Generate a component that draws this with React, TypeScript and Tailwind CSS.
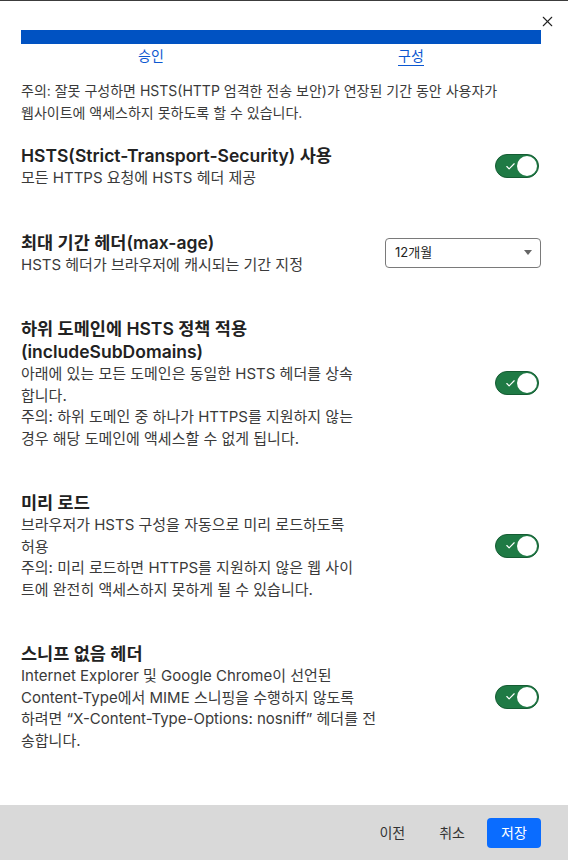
import { Check, X } from "lucide-react";

const font = { fontFamily: "Inter, 'Noto Sans CJK KR', sans-serif" };

function Toggle() {
  return (
    <div className="relative mr-[2px] flex h-[24px] w-[44px] shrink-0 items-center rounded-full border border-[#155c33] bg-[#1f7a45]">
      <Check className="ml-[9px] h-[11px] w-[11px] text-white" strokeWidth={2.5} />
      <div className="absolute right-[1px] top-[1px] h-[20px] w-[20px] rounded-full bg-white" />
    </div>
  );
}

function Section({
  title,
  lines,
  control,
}: {
  title: React.ReactNode;
  lines: string[];
  control: React.ReactNode;
}) {
  return (
    <div className="flex items-center justify-between">
      <div className="w-[345px]">
        <h3 className="text-[17.5px] font-semibold leading-[23px] text-[#222]">{title}</h3>
        <div className="whitespace-nowrap text-[15px] leading-[21.5px] text-[#3a3a3a]">
          {lines.map((line) => (
            <div key={line}>{line}</div>
          ))}
        </div>
      </div>
      {control}
    </div>
  );
}

export default function App() {
  return (
    <div className="flex h-[860px] flex-col border-t border-[#3c3c3c] bg-white" style={font}>
      <div className="relative flex-1 px-[21px] pt-[29px]">
        <button className="absolute right-[12px] top-[12px] text-[#222]">
          <X className="h-[17px] w-[17px]" strokeWidth={1.5} />
        </button>
        <div className="h-[14px] w-[520px] bg-[#0052c2]" />
        <div className="grid w-[520px] grid-cols-2 text-[14px] leading-[20px] text-[#0b57d0]">
          <div className="pt-[2px] text-center">승인</div>
          <div className="pt-[2px] text-center">
            <span className="border-b border-[#0b57d0] pb-[1px]">구성</span>
          </div>
        </div>

        <p className="mt-[14px] w-[520px] text-[14px] leading-[22px] text-[#3a3a3a]">
          주의: 잘못 구성하면 HSTS(HTTP 엄격한 전송 보안)가 연장된 기간 동안 사용자가
          <br />
          웹사이트에 액세스하지 못하도록 할 수 있습니다.
        </p>

        <div className="mt-[20px] flex w-[520px] flex-col gap-[42px]">
          <Section
            title="HSTS(Strict-Transport-Security) 사용"
            lines={["모든 HTTPS 요청에 HSTS 헤더 제공"]}
            control={<Toggle />}
          />

          <Section
            title="최대 기간 헤더(max-age)"
            lines={["HSTS 헤더가 브라우저에 캐시되는 기간 지정"]}
            control={
              <div className="flex h-[30px] w-[156px] items-center justify-between rounded-[4px] border border-[#7a7a7a] pl-[9px] pr-[8px] text-[13px] text-[#222]">
                <span>12개월</span>
                <span className="h-0 w-0 border-x-[4px] border-t-[5px] border-x-transparent border-t-[#666]" />
              </div>
            }
          />

          <Section
            title={
              <>
                하위 도메인에 HSTS 정책 적용
                <br />
                (includeSubDomains)
              </>
            }
            lines={[
              "아래에 있는 모든 도메인은 동일한 HSTS 헤더를 상속",
              "합니다.",
              "주의: 하위 도메인 중 하나가 HTTPS를 지원하지 않는",
              "경우 해당 도메인에 액세스할 수 없게 됩니다.",
            ]}
            control={<Toggle />}
          />

          <Section
            title="미리 로드"
            lines={[
              "브라우저가 HSTS 구성을 자동으로 미리 로드하도록",
              "허용",
              "주의: 미리 로드하면 HTTPS를 지원하지 않은 웹 사이",
              "트에 완전히 액세스하지 못하게 될 수 있습니다.",
            ]}
            control={<Toggle />}
          />

          <Section
            title="스니프 없음 헤더"
            lines={[
              "Internet Explorer 및 Google Chrome이 선언된",
              "Content-Type에서 MIME 스니핑을 수행하지 않도록",
              "하려면 “X-Content-Type-Options: nosniff” 헤더를 전",
              "송합니다.",
            ]}
            control={<Toggle />}
          />
        </div>
      </div>

      <div className="flex h-[55px] items-center justify-end gap-[10px] bg-[#d9d9d9] pr-[27px] text-[14px]">
        <button className="px-[12px] py-[5px] text-[#333]">이전</button>
        <button className="px-[12px] py-[5px] text-[#333]">취소</button>
        <button className="h-[30px] w-[54px] rounded-[4px] bg-[#0a6cff] text-white">저장</button>
      </div>
    </div>
  );
}
